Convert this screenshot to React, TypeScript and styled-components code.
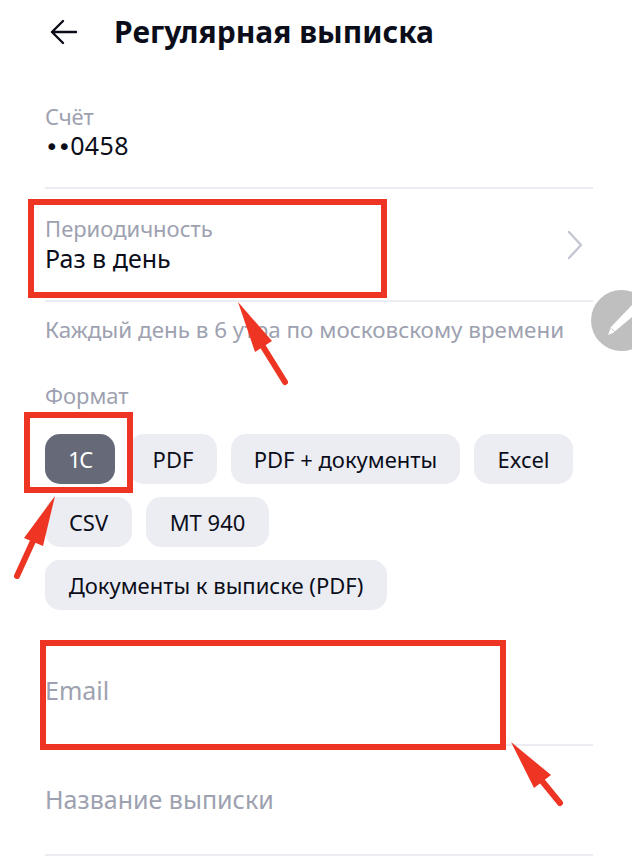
import styled, { createGlobalStyle } from 'styled-components';

const GlobalStyle = createGlobalStyle`
  html, body { margin: 0; padding: 0; background: #fff; }
  body { font-family: "Noto Sans", "Liberation Sans", sans-serif; color: #0b0e1a; overflow: hidden; }
`;

const Page = styled.div`
  position: relative;
  width: 632px;
  height: 858px;
  overflow: hidden;
  background: #fff;
`;

const Header = styled.header`
  display: flex;
  align-items: center;
  height: 64px;
  padding-left: 50px;
`;

const BackIcon = styled.svg`
  width: 28px;
  height: 26px;
  margin-right: 36px;
  flex: none;
`;

const Title = styled.h1`
  margin: 0;
  font-size: 30px;
  line-height: 36px;
  font-weight: 700;
`;

const Content = styled.main`
  padding: 38px 39px 0 45px;
`;

const Field = styled.div<{ $height: number }>`
  display: flex;
  align-items: center;
  justify-content: space-between;
  height: ${p => p.$height}px;
  padding-bottom: 2px;
  border-bottom: 2px solid #ecedf3;
  box-sizing: border-box;
`;

const AccountField = styled(Field)`
  align-items: flex-start;
`;

const Label = styled.div`
  font-size: 22px;
  line-height: 28px;
  color: #9da1b0;
`;

const Value = styled.div`
  font-size: 25px;
  line-height: 32px;
`;

const AccountValue = styled(Value)`
  margin-top: -1px;
  letter-spacing: 0.4px;
`;

const Dots = styled.span`
  font-family: "DejaVu Sans", sans-serif;
  font-size: 23px;
  line-height: 1;
  letter-spacing: -1px;
`;

const Chevron = styled.svg`
  width: 18px;
  height: 30px;
  margin: 2px 9px 0 0;
`;

const Hint = styled.div`
  margin-top: 14px;
  font-size: 22.4px;
  line-height: 28px;
  color: #9da1b0;
  white-space: nowrap;
`;

const FormatLabel = styled(Label)`
  margin-top: 37px;
`;

const Chips = styled.div`
  display: flex;
  flex-wrap: wrap;
  gap: 13px 14px;
  margin-top: 25px;
`;

const Chip = styled.button<{ $active?: boolean; $width: number }>`
  width: ${p => p.$width}px;
  height: 50px;
  padding: 0;
  border: 0;
  border-radius: 15px;
  font: inherit;
  font-size: 22px;
  white-space: nowrap;
  letter-spacing: ${p => (p.$active ? '-1.5px' : '0')};
  background: ${p => (p.$active ? '#666a78' : '#ecedf3')};
  color: ${p => (p.$active ? '#fff' : '#0b0e1a')};
`;

const InputRow = styled.div<{ $height: number; $top: number; $bottom: number }>`
  display: flex;
  align-items: center;
  height: ${p => p.$height}px;
  padding: ${p => p.$top}px 0 ${p => p.$bottom}px;
  border-bottom: 2px solid #ecedf3;
  box-sizing: border-box;
  font-size: 25px;
  color: #9da1b0;
`;

const Fab = styled.div`
  position: absolute;
  left: 591px;
  top: 290px;
  width: 61px;
  height: 61px;
  border-radius: 50%;
  background: #bfbfbf;
`;

const Frame = styled.div<{ $x: number; $y: number; $w: number; $h: number }>`
  position: absolute;
  left: ${p => p.$x}px;
  top: ${p => p.$y}px;
  width: ${p => p.$w}px;
  height: ${p => p.$h}px;
  box-sizing: border-box;
  border: 6px solid #ee3524;
`;

const Arrows = styled.svg`
  position: absolute;
  inset: 0;
  pointer-events: none;
`;

const formats = [
  { name: '1C', width: 70 },
  { name: 'PDF', width: 88 },
  { name: 'PDF + документы', width: 229 },
  { name: 'Excel', width: 99 },
  { name: 'CSV', width: 87 },
  { name: 'MT 940', width: 123 },
  { name: 'Документы к выписке (PDF)', width: 342 },
];

export default function App() {
  return (
    <Page>
      <GlobalStyle />
      <Header>
        <BackIcon viewBox="0 0 28 26" fill="none" stroke="#0b0e1a" strokeWidth="2.4" strokeLinecap="round" strokeLinejoin="round">
          <path d="M26 13H2M13 2 2 13l11 11" />
        </BackIcon>
        <Title>Регулярная выписка</Title>
      </Header>
      <Content>
        <AccountField $height={87}>
          <div>
            <Label>Счёт</Label>
            <AccountValue><Dots>••</Dots>0458</AccountValue>
          </div>
        </AccountField>
        <Field $height={113}>
          <div>
            <Label>Периодичность</Label>
            <Value>Раз в день</Value>
          </div>
          <Chevron viewBox="0 0 18 30" fill="none" stroke="#c4c6d0" strokeWidth="2.4" strokeLinecap="round" strokeLinejoin="round">
            <path d="M3 2l12 13L3 28" />
          </Chevron>
        </Field>
        <Hint>Каждый день в 6 утра по московскому времени</Hint>
        <FormatLabel>Формат</FormatLabel>
        <Chips>
          {formats.map((f, i) => (
            <Chip key={f.name} $active={i === 0} $width={f.width}>{f.name}</Chip>
          ))}
        </Chips>
        <InputRow $height={136} $top={25} $bottom={0}>Email</InputRow>
        <InputRow $height={110} $top={0} $bottom={2}>Название выписки</InputRow>
      </Content>

      <Fab>
        <svg width="41" height="61" viewBox="0 0 41 61" fill="#fff">
          <path d="M17 45 20 37 41 15V27L22 43z" />
          <path d="M20.5 38.5 23.5 41.5" stroke="#bfbfbf" strokeWidth="1" />
        </svg>
      </Fab>

      <Frame $x={28} $y={199} $w={359} $h={99} />
      <Frame $x={24} $y={412} $w={109} $h={81} />
      <Frame $x={40} $y={640} $w={466} $h={110} />

      <Arrows width="632" height="858" viewBox="0 0 632 858" fill="#ee3524" stroke="#ee3524" strokeLinecap="round">
        <path stroke="none" d="M238 302 255 352 272 341z" />
        <path strokeWidth="6" d="M262 345 285 382" />
        <path stroke="none" d="M55 496 24 538 43 546z" />
        <path strokeWidth="6" d="M33 541 17 576" />
        <path stroke="none" d="M511 742 534 788 551 775z" />
        <path strokeWidth="6" d="M542 781 560 803" />
      </Arrows>
    </Page>
  );
}
